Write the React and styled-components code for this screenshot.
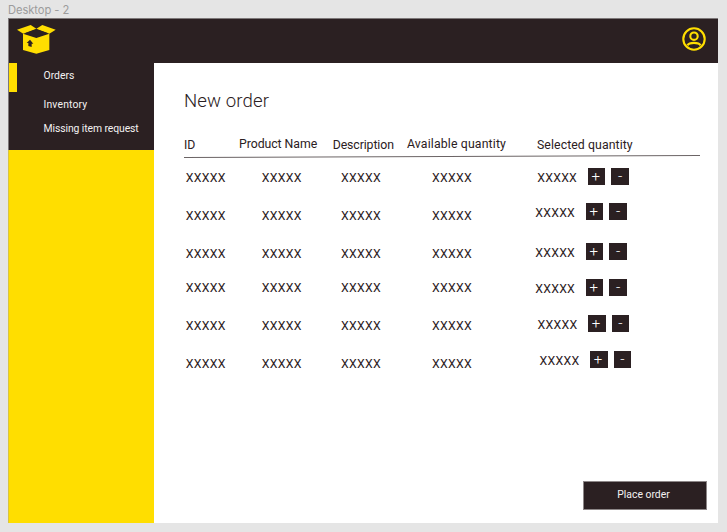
import React from "react";
import styled, { createGlobalStyle } from "styled-components";

const ink = "#2b2022";
const yellow = "#ffde00";

const GlobalStyle = createGlobalStyle`
  * { box-sizing: border-box; }
  body {
    margin: 0;
    background: #e5e5e5;
    color: ${ink};
    font-family: Roboto, "Liberation Sans", sans-serif;
    font-size: 12.3px;
    font-weight: 400;
    overflow: hidden;
  }
`;

const Page = styled.div`
  width: 727px;
  height: 532px;
  padding: 0 9px 9px 8px;
  display: flex;
  flex-direction: column;
`;

const FrameLabel = styled.div`
  height: 18px;
  line-height: 20px;
  font-family: Inter, sans-serif;
  font-size: 11.2px;
  letter-spacing: -0.08px;
  color: #9c9c9c;
`;

const Frame = styled.div`
  flex: 1;
  display: flex;
  flex-direction: column;
  background: #fff;
  border-style: solid;
  border-image: linear-gradient(#7d7879 132px, #d8c440 132px) 1;
  border-width: 0 0 0 1px;
`;

const TopBar = styled.header`
  height: 45px;
  flex: none;
  display: flex;
  justify-content: space-between;
  align-items: flex-start;
  padding: 6px 12px 0 8px;
  background: ${ink};
  border-top: 1px solid #7d7879;
`;

const Logo = styled.svg`
  width: 40px;
  height: 30px;
`;

const Avatar = styled.svg`
  width: 24px;
  height: 24px;
  margin-top: 2.3px;
`;

const Body = styled.div`
  flex: 1;
  display: flex;
`;

const Sidebar = styled.aside`
  width: 144.5px;
  flex: none;
  background: ${yellow};
`;

const Nav = styled.nav`
  height: 87.4px;
  background: ${ink};
  display: flex;
`;

const ActiveMark = styled.div`
  width: 8px;
  height: 28.5px;
  background: ${yellow};
`;

const NavList = styled.div`
  display: flex;
  flex-direction: column;
  padding: 1px 0 0 26.5px;
`;

const NavItem = styled.a`
  height: ${(p) => p.$height}px;
  line-height: 24px;
  font-size: 10.4px;
  letter-spacing: ${(p) => p.$tracking || 0}px;
  white-space: nowrap;
  color: #f4f2f2;
`;

const Main = styled.main`
  flex: 1;
  display: flex;
  flex-direction: column;
  padding: 26px 11.5px 13.5px 30.5px;
`;

const Title = styled.h1`
  margin: 0;
  height: 45px;
  line-height: 24px;
  font-size: 18.6px;
  font-weight: 300;
  letter-spacing: 0.1px;
`;

const HeadRow = styled.div`
  display: grid;
  grid-template-columns: 55px 93.7px 74.3px 130px 1fr;
  height: 22px;
`;

const HeadCell = styled.div`
  padding-top: ${(p) => p.$drop || 0}px;
  line-height: 20px;
  letter-spacing: ${(p) => p.$tracking || 0}px;
  white-space: nowrap;
`;

const Rule = styled.div`
  width: 516px;
  height: 1px;
  background: #6b6465;
  transform: rotate(-0.22deg);
`;

const Tables = styled.div`
  flex: 1;
  display: flex;
  padding: 11px 0 0 1.8px;
`;

const StockList = styled.div`
  width: 349.4px;
`;

const StockRow = styled.div`
  display: grid;
  grid-template-columns: 76px 79.2px 91px 1fr;
  height: ${(p) => p.$height}px;
`;

const Value = styled.div`
  line-height: 20px;
  letter-spacing: 0.27px;
`;

const PickRow = styled.div`
  display: flex;
  align-items: flex-start;
  height: ${(p) => p.$height}px;
  padding-left: ${(p) => p.$indent}px;
`;

const PickValue = styled(Value)`
  width: 50.7px;
`;

const Step = styled.button`
  width: 17.5px;
  height: 17px;
  margin-right: 6px;
  padding: ${(p) => p.$pad};
  border: 0;
  background: ${ink};
  color: #fff;
  font: 300 15px/17px Roboto, sans-serif;
  text-align: center;
`;

const PlaceOrder = styled.button`
  align-self: flex-end;
  width: 124px;
  height: 28.5px;
  padding: 0 2px 2px 0;
  border: 1px solid #8d8788;
  background: ${ink};
  color: #f4f2f2;
  font: 400 10.4px Roboto, sans-serif;
`;

const stockRows = [38, 38, 34, 38, 38, 20];
const pickRows = [
  { height: 35, indent: 2 },
  { height: 40, indent: 0 },
  { height: 36, indent: 0 },
  { height: 36, indent: 0 },
  { height: 36, indent: 2.3 },
  { height: 20, indent: 4.3 },
];

function BoxLogo() {
  return (
    <Logo viewBox="0 0 120 90">
      <g fill={yellow}>
        <path d="M0 14 41 0 58 11 19 26z" />
        <path d="M58 11 76 0 116 14 97 26z" />
        <path d="M18 26 58 39 97 26V75L58 86 18 75z" />
      </g>
      <path fill={ink} d="M23 25 58 13 94 25 58 37z" />
      <path fill={ink} d="M39 44 49 56H44V66L34 63V54L29 54z" />
    </Logo>
  );
}

function UserIcon() {
  return (
    <Avatar viewBox="0 0 24 24" fill="none" stroke={yellow} strokeWidth="2.1">
      <circle cx="12" cy="12" r="10.7" />
      <circle cx="12" cy="9.2" r="3.7" />
      <path d="M5.4 18.4C6.6 16.4 9.2 15.9 12 15.9s5.4 .5 6.6 2.5" />
    </Avatar>
  );
}

export default function App() {
  return (
    <Page>
      <GlobalStyle />
      <FrameLabel>Desktop - 2</FrameLabel>
      <Frame>
        <TopBar>
          <BoxLogo />
          <UserIcon />
        </TopBar>
        <Body>
          <Sidebar>
            <Nav>
              <ActiveMark />
              <NavList>
                <NavItem $height={28.5}>Orders</NavItem>
                <NavItem $height={24} $tracking={0.15}>Inventory</NavItem>
                <NavItem $height={24} $tracking={-0.09}>Missing item request</NavItem>
              </NavList>
            </Nav>
          </Sidebar>
          <Main>
            <Title>New order</Title>
            <HeadRow>
              <HeadCell $drop={1}>ID</HeadCell>
              <HeadCell $tracking={-0.06}>Product Name</HeadCell>
              <HeadCell $drop={1} $tracking={-0.1}>Description</HeadCell>
              <HeadCell $tracking={0.14}>Available quantity</HeadCell>
              <HeadCell $drop={1} $tracking={0.08}>Selected quantity</HeadCell>
            </HeadRow>
            <Rule />
            <Tables>
              <StockList>
                {stockRows.map((height, i) => (
                  <StockRow key={i} $height={height}>
                    <Value>XXXXX</Value>
                    <Value>XXXXX</Value>
                    <Value>XXXXX</Value>
                    <Value>XXXXX</Value>
                  </StockRow>
                ))}
              </StockList>
              <div>
                {pickRows.map((row, i) => (
                  <PickRow key={i} $height={row.height} $indent={row.indent}>
                    <PickValue>XXXXX</PickValue>
                    <Step $pad="0 2px 0 0">+</Step>
                    <Step $pad="0 0 2px 0">-</Step>
                  </PickRow>
                ))}
              </div>
            </Tables>
            <PlaceOrder>Place order</PlaceOrder>
          </Main>
        </Body>
      </Frame>
    </Page>
  );
}
